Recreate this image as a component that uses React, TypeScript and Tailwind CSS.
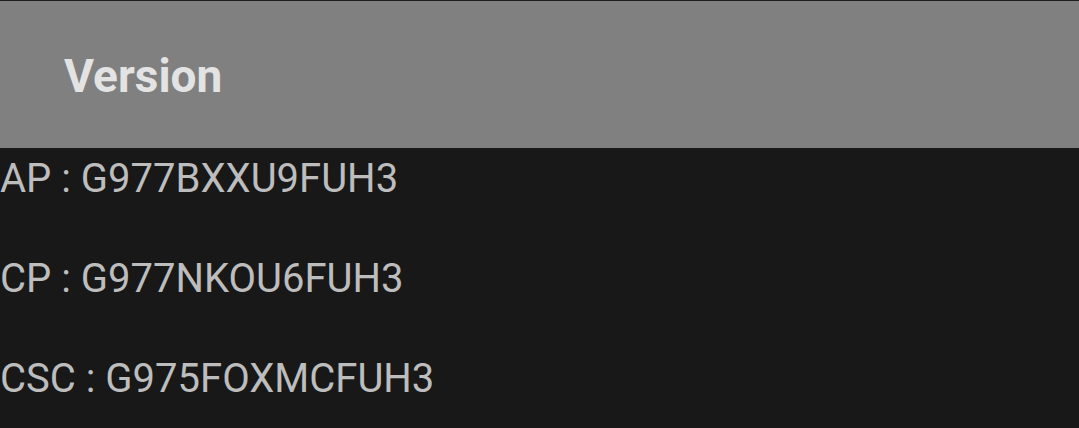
export default function App() {
  return (
    <div
      className="w-[1079px] h-[428px] overflow-hidden bg-[#181818]"
      style={{ fontFamily: "Roboto, 'Noto Sans', sans-serif" }}
    >
      <div className="h-[148px] border-t border-[#1e1e1e] bg-[#808080] pl-[64px] pt-[52px]">
        <div className="text-[46px] leading-[46px] font-bold text-[#e3e3e3]">Version</div>
      </div>
      <div className="flex flex-col gap-[60px] pt-[11px] text-[40px] leading-[40px] text-[#bdbdbd]">
        <div>AP : G977BXXU9FUH3</div>
        <div>CP : G977NKOU6FUH3</div>
        <div>CSC : G975FOXMCFUH3</div>
      </div>
    </div>
  );
}
